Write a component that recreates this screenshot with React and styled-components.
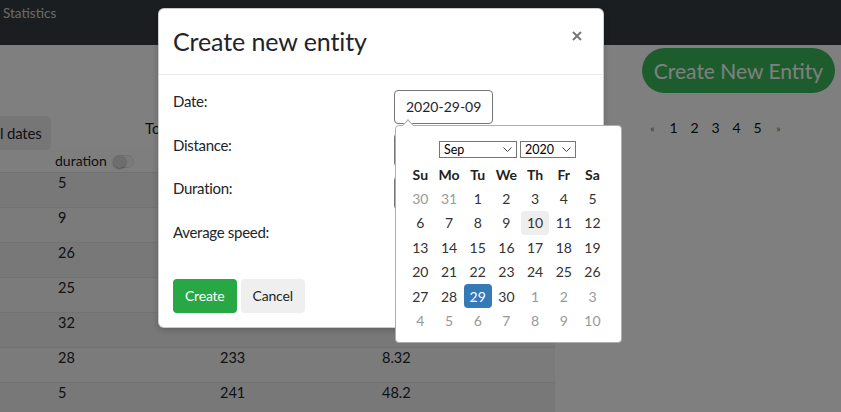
import React from "react";
import styled, { createGlobalStyle } from "styled-components";

const GlobalStyle = createGlobalStyle`
  html, body {
    margin: 0;
    padding: 0;
  }
  body {
    font-family: Lato, "Open Sans", sans-serif;
    font-size: 15px;
    color: #212529;
    background: #fff;
  }
  * {
    box-sizing: border-box;
  }
`;

// rows that sit under the modal keep only the first column visible
const rows = [
  [5, "", ""],
  [9, "", ""],
  [26, "", ""],
  [25, "", ""],
  [32, "", ""],
  [28, 233, 8.32],
  [5, 241, 48.2],
];

const weeks = [
  [[30, 1], [31, 1], [1], [2], [3], [4], [5]],
  [[6], [7], [8], [9], [10, 0, "hover"], [11], [12]],
  [[13], [14], [15], [16], [17], [18], [19]],
  [[20], [21], [22], [23], [24], [25], [26]],
  [[27], [28], [29, 0, "selected"], [30], [1, 1], [2, 1], [3, 1]],
  [[4, 1], [5, 1], [6, 1], [7, 1], [8, 1], [9, 1], [10, 1]],
];

const Chevron = () => (
  <svg width="9" height="5" viewBox="0 0 9 5">
    <path d="M0.5 0.5 L4.5 4.5 L8.5 0.5" fill="none" stroke="#444" strokeWidth="1" />
  </svg>
);

const App = () => {
  return (
    <>
      <GlobalStyle />
      <Screen>
        <Navbar>
          <NavLink>Statistics</NavLink>
        </Navbar>
        <Main>
          <LeftCol>
            <FilterRow>
              <DatesButton>l dates</DatesButton>
              <FilterLabel>To</FilterLabel>
            </FilterRow>
            <Table>
              <HeadRow>
                <HeadCell>
                  duration
                  <Toggle>
                    <Knob />
                  </Toggle>
                </HeadCell>
              </HeadRow>
              {rows.map((r, i) => (
                <Row key={i} odd={i % 2 === 0}>
                  <Cell>{r[0]}</Cell>
                  <Cell>{r[1]}</Cell>
                  <Cell>{r[2]}</Cell>
                </Row>
              ))}
            </Table>
          </LeftCol>
          <RightCol>
            <CreateEntityButton>Create New Entity</CreateEntityButton>
            <Pagination>
              <PageArrow>«</PageArrow>
              {[1, 2, 3, 4, 5].map((n) => (
                <PageNum key={n}>{n}</PageNum>
              ))}
              <PageArrow>»</PageArrow>
            </Pagination>
          </RightCol>
        </Main>

        <Backdrop />
        <ModalLayer>
          <Modal>
            <ModalHeader>
              <ModalTitle>Create new entity</ModalTitle>
              <CloseButton aria-label="close">
                <svg width="10" height="10" viewBox="0 0 10 10">
                  <path d="M1 1 L9 9 M9 1 L1 9" stroke="#777" strokeWidth="2" />
                </svg>
              </CloseButton>
            </ModalHeader>
            <ModalBody>
              <FormRow>
                <Label>Date:</Label>
                <Field>
                  <DateInput>2020-29-09</DateInput>
                  <Picker>
                    <PickerArrow />
                    <SelectRow>
                      <FakeSelect w={78}>
                        Sep
                        <Chevron />
                      </FakeSelect>
                      <FakeSelect w={56}>
                        2020
                        <Chevron />
                      </FakeSelect>
                    </SelectRow>
                    <DayGrid>
                      {["Su", "Mo", "Tu", "We", "Th", "Fr", "Sa"].map((d) => (
                        <DayName key={d}>{d}</DayName>
                      ))}
                      {weeks.flat().map(([d, out, state], i) => (
                        <Day key={i} out={!!out} state={state}>
                          {d}
                        </Day>
                      ))}
                    </DayGrid>
                  </Picker>
                </Field>
              </FormRow>
              <FormRow>
                <Label>Distance:</Label>
                <Field>
                  <TextInput />
                </Field>
              </FormRow>
              <FormRow>
                <Label>Duration:</Label>
                <Field>
                  <TextInput />
                </Field>
              </FormRow>
              <FormRow>
                <Label>Average speed:</Label>
                <Field />
              </FormRow>
            </ModalBody>
            <ModalFooter>
              <Button variant="success">Create</Button>
              <Button>Cancel</Button>
            </ModalFooter>
          </Modal>
        </ModalLayer>
      </Screen>
    </>
  );
};

export default App;

const Screen = styled.div`
  position: relative;
  width: 841px;
  height: 412px;
  overflow: hidden;
  background: #fff;
`;

const Navbar = styled.div`
  height: 45px;
  background: #373d42;
  padding: 3px 3px;
`;

const NavLink = styled.span`
  font-size: 13.5px;
  line-height: 18px;
  color: rgba(255, 255, 255, 0.78);
`;

const Main = styled.div`
  display: grid;
  grid-template-columns: 555px 1fr;
`;

const LeftCol = styled.div`
  padding-top: 71px;
`;

const FilterRow = styled.div`
  display: flex;
  align-items: flex-start;
  height: 34px;
`;

const DatesButton = styled.div`
  width: 51px;
  height: 34px;
  line-height: 34px;
  background: #ececec;
  border-radius: 0 5px 5px 0;
  font-size: 15px;
  letter-spacing: -0.2px;
  white-space: nowrap;
  color: #212529;
`;

const FilterLabel = styled.div`
  margin-left: 94px;
  line-height: 24px;
  font-size: 15px;
`;

const Table = styled.div`
  background: #f9f9f9;
`;

const HeadRow = styled.div`
  height: 22px;
  padding-left: 55px;
  background: #fcfcfc;
`;

const HeadCell = styled.div`
  display: flex;
  align-items: center;
  gap: 6px;
  font-size: 14px;
  line-height: 22px;
`;

const Toggle = styled.div`
  width: 21px;
  height: 13px;
  border-radius: 7px;
  background: #f4f4f4;
  border: 1px solid #e2e2e2;
  position: relative;
`;

const Knob = styled.div`
  position: absolute;
  left: -1px;
  top: -1px;
  width: 13px;
  height: 13px;
  border-radius: 50%;
  background: #dcdcdc;
  box-shadow: 0 1px 2px rgba(0, 0, 0, 0.35);
`;

const Row = styled.div`
  display: grid;
  grid-template-columns: 162px 162px 1fr;
  height: 35px;
  padding-left: 58px;
  border-top: 1px solid #e4e4e4;
  background: ${(p) => (p.odd ? "#f0f0f0" : "#f6f6f6")};
`;

const Cell = styled.div`
  font-size: 14.5px;
  line-height: 20px;
  color: #212529;
`;

const RightCol = styled.div`
  display: flex;
  flex-direction: column;
  padding: 3px 6px 0 0;
`;

const CreateEntityButton = styled.div`
  align-self: flex-end;
  width: 193px;
  height: 45px;
  border-radius: 23px;
  background: #3aba5a;
  color: #fff;
  font-size: 21px;
  white-space: nowrap;
  display: flex;
  align-items: center;
  justify-content: center;
`;

const Pagination = styled.div`
  display: flex;
  margin-top: 25px;
  margin-left: 87px;
`;

const PageNum = styled.span`
  width: 21px;
  text-align: center;
  font-size: 14px;
  line-height: 20px;
  color: #111;
`;

const PageArrow = styled(PageNum)`
  font-size: 10px;
  color: #666;
`;

const Backdrop = styled.div`
  position: absolute;
  inset: 0;
  background: rgba(0, 0, 0, 0.5);
`;

const ModalLayer = styled.div`
  position: absolute;
  inset: 0;
  padding: 8px 0 0 158px;
`;

const Modal = styled.div`
  width: 446px;
  background: #fff;
  border: 1px solid rgba(0, 0, 0, 0.2);
  border-radius: 6px;
  box-shadow: 0 2px 6px rgba(0, 0, 0, 0.2);
`;

const ModalHeader = styled.div`
  display: flex;
  justify-content: space-between;
  align-items: flex-start;
  padding: 16px 14px;
  border-bottom: 1px solid #e9ecef;
`;

const ModalTitle = styled.h3`
  margin: 0;
  font-size: 25px;
  font-weight: 400;
  line-height: 33px;
  letter-spacing: -0.1px;
  color: #212529;
`;

const CloseButton = styled.div`
  display: flex;
  margin: 6px 7px 0 0;
`;

const ModalBody = styled.div`
  padding: 14px 14px 0;
`;

const FormRow = styled.div`
  display: grid;
  grid-template-columns: 221px 1fr;
  height: 43.6px;
`;

const Label = styled.div`
  font-size: 15px;
  line-height: 24px;
  letter-spacing: -0.3px;
  color: #212529;
`;

const Field = styled.div`
  position: relative;
`;

const DateInput = styled.div`
  width: 99px;
  height: 34px;
  margin-top: 1px;
  border: 1px solid #767676;
  border-radius: 4px;
  padding: 0 11px;
  font-size: 14px;
  line-height: 32px;
  white-space: nowrap;
  color: #212529;
`;

const TextInput = styled.div`
  width: 196px;
  height: 34px;
  border: 1px solid #767676;
  border-radius: 4px;
`;

const Picker = styled.div`
  position: absolute;
  top: 36px;
  left: 1px;
  width: 227px;
  height: 218px;
  background: #fff;
  border: 1px solid #aeaeae;
  border-radius: 4px;
  padding: 15px 0 0 10px;
  z-index: 2;
`;

const PickerArrow = styled.div`
  position: absolute;
  top: -5px;
  left: 8px;
  width: 8px;
  height: 8px;
  background: #fff;
  border-left: 1px solid #aeaeae;
  border-top: 1px solid #aeaeae;
  transform: rotate(45deg);
`;

const SelectRow = styled.div`
  display: flex;
  justify-content: center;
  gap: 3px;
  padding-right: 12px;
`;

const FakeSelect = styled.div`
  width: ${(p) => p.w}px;
  height: 17px;
  border: 1px solid #767676;
  display: flex;
  align-items: center;
  justify-content: space-between;
  padding: 0 4px 0 4px;
  font-size: 12.5px;
  color: #000;
`;

const DayGrid = styled.div`
  display: grid;
  grid-template-columns: repeat(7, 28.7px);
  grid-auto-rows: 24.4px;
  margin-top: 4px;
`;

const DayName = styled.div`
  font-size: 14px;
  font-weight: 700;
  color: #222;
  display: flex;
  align-items: center;
  justify-content: center;
`;

const Day = styled.div`
  display: flex;
  align-items: center;
  justify-content: center;
  font-size: 14px;
  border-radius: 4px;
  margin: 0 0.5px;
  color: ${(p) => (p.state === "selected" ? "#fff" : p.out ? "#999" : "#333")};
  background: ${(p) =>
    p.state === "selected" ? "#337ab7" : p.state === "hover" ? "#eee" : "transparent"};
`;

const ModalFooter = styled.div`
  display: flex;
  gap: 4px;
  padding: 15.6px 14px 14px;
`;

const Button = styled.div`
  height: 34px;
  padding: 0 12px;
  border-radius: 4px;
  font-size: 14px;
  letter-spacing: -0.2px;
  line-height: 34px;
  background: ${(p) => (p.variant === "success" ? "#28a745" : "#efefef")};
  color: ${(p) => (p.variant === "success" ? "#fff" : "#212529")};
`;
